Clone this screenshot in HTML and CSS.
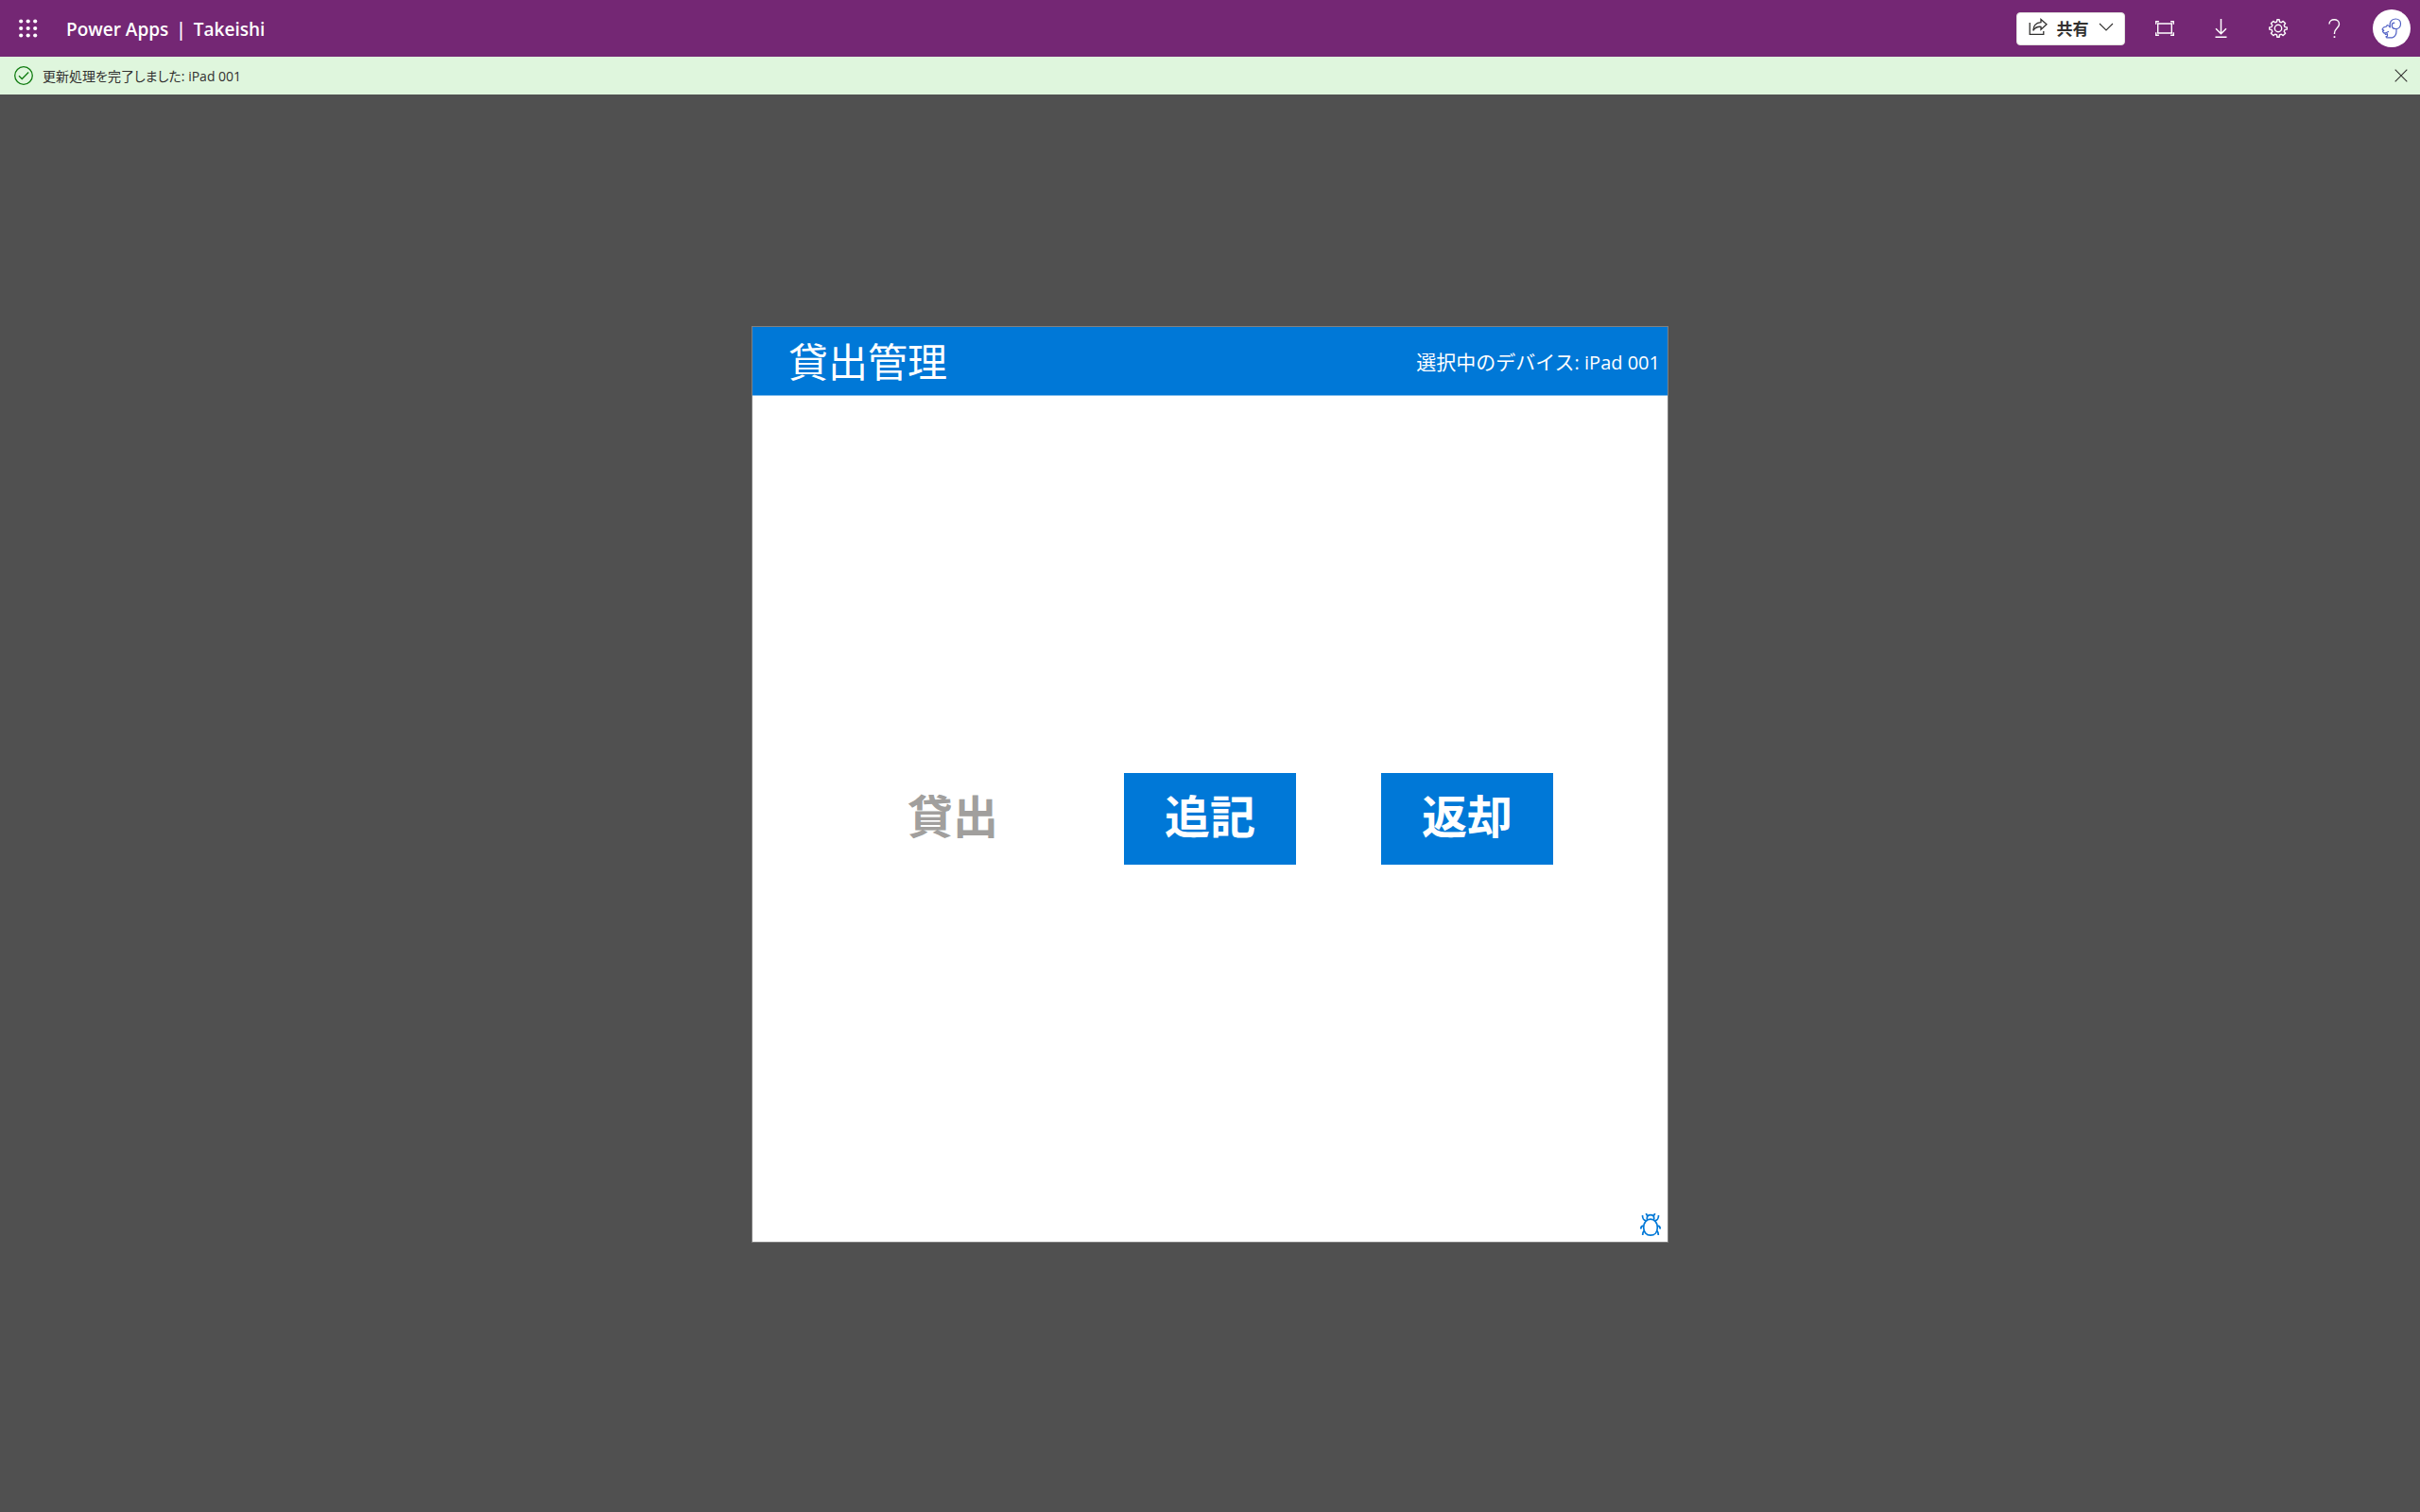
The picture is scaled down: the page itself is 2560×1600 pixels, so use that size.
FILE: index.html
```html
<!DOCTYPE html>
<html lang="ja">
<head>
<meta charset="utf-8">
<title>Power Apps | Takeishi</title>
<link rel="stylesheet" href="styles.css">
</head>
<body>
<header class="topbar">
  <button class="icon-button" type="button" aria-label="アプリ起動ツール">
    <svg width="20" height="20" viewBox="0 0 20 20" fill="currentColor"><circle cx="2.2" cy="2.5" r="2.1"/><circle cx="9.7" cy="2.5" r="2.1"/><circle cx="17.2" cy="2.5" r="2.1"/><circle cx="2.2" cy="10" r="2.1"/><circle cx="9.7" cy="10" r="2.1"/><circle cx="17.2" cy="10" r="2.1"/><circle cx="2.2" cy="17.5" r="2.1"/><circle cx="9.7" cy="17.5" r="2.1"/><circle cx="17.2" cy="17.5" r="2.1"/></svg>
  </button>
  <div class="brand"><a href="#">Power Apps</a><span>|</span><span>Takeishi</span></div>
  <button class="share" type="button">
    <svg width="20" height="20" viewBox="0 0 20 20" fill="none" stroke="currentColor" stroke-width="1.3"><path d="M1.200 5v12.400h14.600V14"/><path d="M13 1.500l6 5.300-6 5.400V9.300C9 9 6.500 10.500 4.800 13.300c.2-4.800 3.200-8.300 8.200-8.700z"/></svg>
    <span>共有</span>
    <svg width="16" height="16" viewBox="0 0 16 16" fill="none" stroke="currentColor" stroke-width="1.100"><path d="M1 4l7 7 7-7"/></svg>
  </button>
  <nav class="tools">
    <button class="icon-button" type="button" aria-label="画面に合わせる">
      <svg width="20" height="20" viewBox="0 0 20 20" fill="none" stroke="currentColor" stroke-width="1.400"><path d="M2.700 5h14.600v10H2.700z"/><path d="M.7 5.800V2.700h3.200M16.100 2.700h3.200v3.100M19.300 14.200v3.100h-3.200M3.900 17.300H.7v-3.100"/></svg>
    </button>
    <button class="icon-button" type="button" aria-label="ダウンロード">
      <svg width="20" height="20" viewBox="0 0 20 20" fill="none" stroke="currentColor" stroke-width="1.500"><path d="M9.500 0v15.500M4 10.200l5.500 5.500 5.500-5.500M3.500 19.300h12"/></svg>
    </button>
    <button class="icon-button" type="button" aria-label="設定">
      <svg width="20" height="20" viewBox="0 0 20 20" fill="none" stroke="currentColor" stroke-width="1.400" stroke-linejoin="round"><path d="M8.600 3L8.900.7h2.200l.3 2.300 1.900.8 1.900-1.400 2.400 2.400-1.400 1.900.8 1.900 2.300.3v2.200l-2.300.3-.8 1.900 1.400 1.900-2.400 2.400-1.900-1.400-1.900.8-.3 2.300H8.900L8.600 17l-1.900-.8-1.900 1.400-2.400-2.400 1.400-1.900-.8-1.900-2.300-.3V8.900L3 8.600l.8-1.900-1.400-1.900 2.400-2.400 1.900 1.400z"/><circle cx="10" cy="10" r="3.700"/></svg>
    </button>
    <button class="icon-button" type="button" aria-label="ヘルプ">
      <svg width="20" height="20" viewBox="0 0 20 20" fill="none" stroke="currentColor" stroke-width="1.400"><path d="M4 5.500C4 2.500 6.400.7 9.300.7s5.200 1.900 5.200 4.800c0 4-5 4.500-5 9.500v1"/><path d="M9.500 18.200v1.800" stroke-width="1.700"/></svg>
    </button>
  </nav>
  <button class="avatar" type="button" aria-label="アカウント">
    <svg width="22" height="22" viewBox="0 0 22 22" fill="none" stroke="currentColor" stroke-width="1.200" stroke-linejoin="round" stroke-linecap="round"><path d="M9.300 9.500C8.300 4.500 10.800 1 15.200 1c3.200 0 5.300 2.200 5.300 5.200s-2.200 5.300-5 5.300c-2.500 0-4.200-1.500-4.200-3.600 0-1.600 1.100-2.700 2.500-2.700"/><path d="M9.300 10c-.3-1.300-1.500-2.300-3-2.500L5.500 9 2.500 10 1 12l1.800 1.200-1.300.9 1 1.700 3-.3M5.500 15.500l2-1M3.500 16l1 1.500 2-.8v2.500l-1.500.6.8 1H12c2.700-1.300 4-3.500 4-6.300v-3"/></svg>
  </button>
</header>
<div class="notice" role="status">
  <svg width="20" height="20" viewBox="0 0 20 20" fill="none" stroke="#107c10" stroke-width="1.300"><circle cx="10" cy="10" r="9.300"/><path d="M5 10.200l3.300 3.300 6.900-7"/></svg>
  <p>更新処理を完了しました: iPad 001</p>
  <button class="close" type="button" aria-label="閉じる">
    <svg width="14" height="14" viewBox="0 0 14 14" fill="none" stroke="currentColor" stroke-width="1.100"><path d="M.7.700l12.600 12.600M13.300.7L.7 13.300"/></svg>
  </button>
</div>
<main class="stage">
  <section class="app">
    <div class="app-header">
      <h1>貸出管理</h1>
      <p>選択中のデバイス<span class="device">: iPad 001</span></p>
    </div>
    <div class="app-body">
      <button class="action" type="button" disabled>貸出</button>
      <button class="action" type="button">追記</button>
      <button class="action" type="button">返却</button>
      <button class="debug" type="button" aria-label="デバッグ">
        <svg width="22" height="26" viewBox="0 0 22 26" fill="none" stroke="currentColor" stroke-width="1.700"><path d="M11 7.200c4.300 0 7.300 3.600 7.300 8.700S15.300 24.200 11 24.200s-7.300-3.200-7.300-8.300S6.700 7.200 11 7.200z"/><path d="M7.300 7.800V5.900c0-2 1.500-3.300 3.700-3.300s3.700 1.300 3.700 3.300v1.900M6.500 1c0 1.500.6 2.300 2 2.500M15.500 1c0 1.500-.6 2.300-2 2.500M2.500 3c0 4 .9 5 3.500 5.700M19.500 3c0 4-.9 5-3.500 5.700M3.700 14.200C1.400 14.200.8 15 .8 17.400M18.300 14.200c2.300 0 2.900.8 2.900 3.200M4.500 19.500c-1.600.7-1.800 2-1.800 4.500M17.500 19.500c1.600.7 1.800 2 1.800 4.500"/></svg>
      </button>
    </div>
  </section>
</main>
</body>
</html>
```

FILE: styles.css
```css
* {
  box-sizing: border-box;
}

body {
  display: flex;
  flex-direction: column;
  min-height: 100vh;
  margin: 0;
  background: #505050;
  color: #323130;
  font-family: "Open Sans", "Noto Sans CJK JP", sans-serif;
}

h1,
p {
  margin: 0;
}

button {
  display: flex;
  align-items: center;
  justify-content: center;
  padding: 0;
  border: 0;
  background: none;
  color: inherit;
  font: inherit;
  cursor: pointer;
}

svg {
  display: block;
  flex: none;
}

.topbar {
  display: flex;
  align-items: center;
  height: 60px;
  padding-right: 10px;
  background: #742774;
  color: #fff;
}

.icon-button {
  width: 60px;
  height: 60px;
}

.brand {
  display: flex;
  gap: 8px;
  margin-left: 10px;
  padding-top: 2px;
  font-size: 19px;
  font-weight: 600;
  line-height: 28px;
}

.brand a {
  color: inherit;
  text-decoration: none;
}

.share {
  gap: 10px;
  width: 115px;
  height: 35px;
  margin-left: auto;
  padding-bottom: 2px;
  border: 1px solid #e1dfdd;
  border-radius: 4px;
  background: #fff;
  color: #323130;
  font-size: 17px;
  font-weight: 600;
}

.tools {
  display: flex;
  margin-left: 12px;
}

.avatar {
  width: 40px;
  height: 40px;
  margin-left: 10px;
  border-radius: 50%;
  background: #fff;
  color: #4f5fc4;
}

.notice {
  display: flex;
  align-items: center;
  gap: 10px;
  height: 40px;
  padding: 0 13px 0 15px;
  background: #dff6dd;
  font-size: 14px;
  font-feature-settings: "palt";
}

.close {
  margin-left: auto;
}

.stage {
  display: flex;
  flex: 1;
  align-items: center;
  justify-content: center;
  padding-bottom: 40px;
}

.app {
  display: flex;
  flex-direction: column;
  width: 970px;
  max-width: 100%;
  aspect-ratio: 1;
  border: 1px solid #808080;
  background: #fff;
}

.app-header {
  display: flex;
  align-items: center;
  justify-content: space-between;
  height: 73px;
  padding: 0 8px 0 38px;
  border-bottom: 1px solid #80bceb;
  background: #0078d7;
  color: #fff;
  font-size: 21px;
}

.app-header h1 {
  padding-bottom: 4px;
  font-size: 42px;
  font-weight: 400;
}

.device {
  font-size: 20px;
}

.app-body {
  position: relative;
  display: flex;
  flex: 1;
  align-items: center;
  justify-content: center;
  gap: 90px;
}

.action {
  width: 182px;
  height: 97px;
  padding-bottom: 12px;
  background: #0078d7;
  color: #fff;
  font-size: 48px;
  font-weight: 700;
}

.action:disabled {
  background: none;
  color: #a19f9d;
}

.debug {
  position: absolute;
  right: 7px;
  bottom: 5px;
  color: #0078d7;
}
```
